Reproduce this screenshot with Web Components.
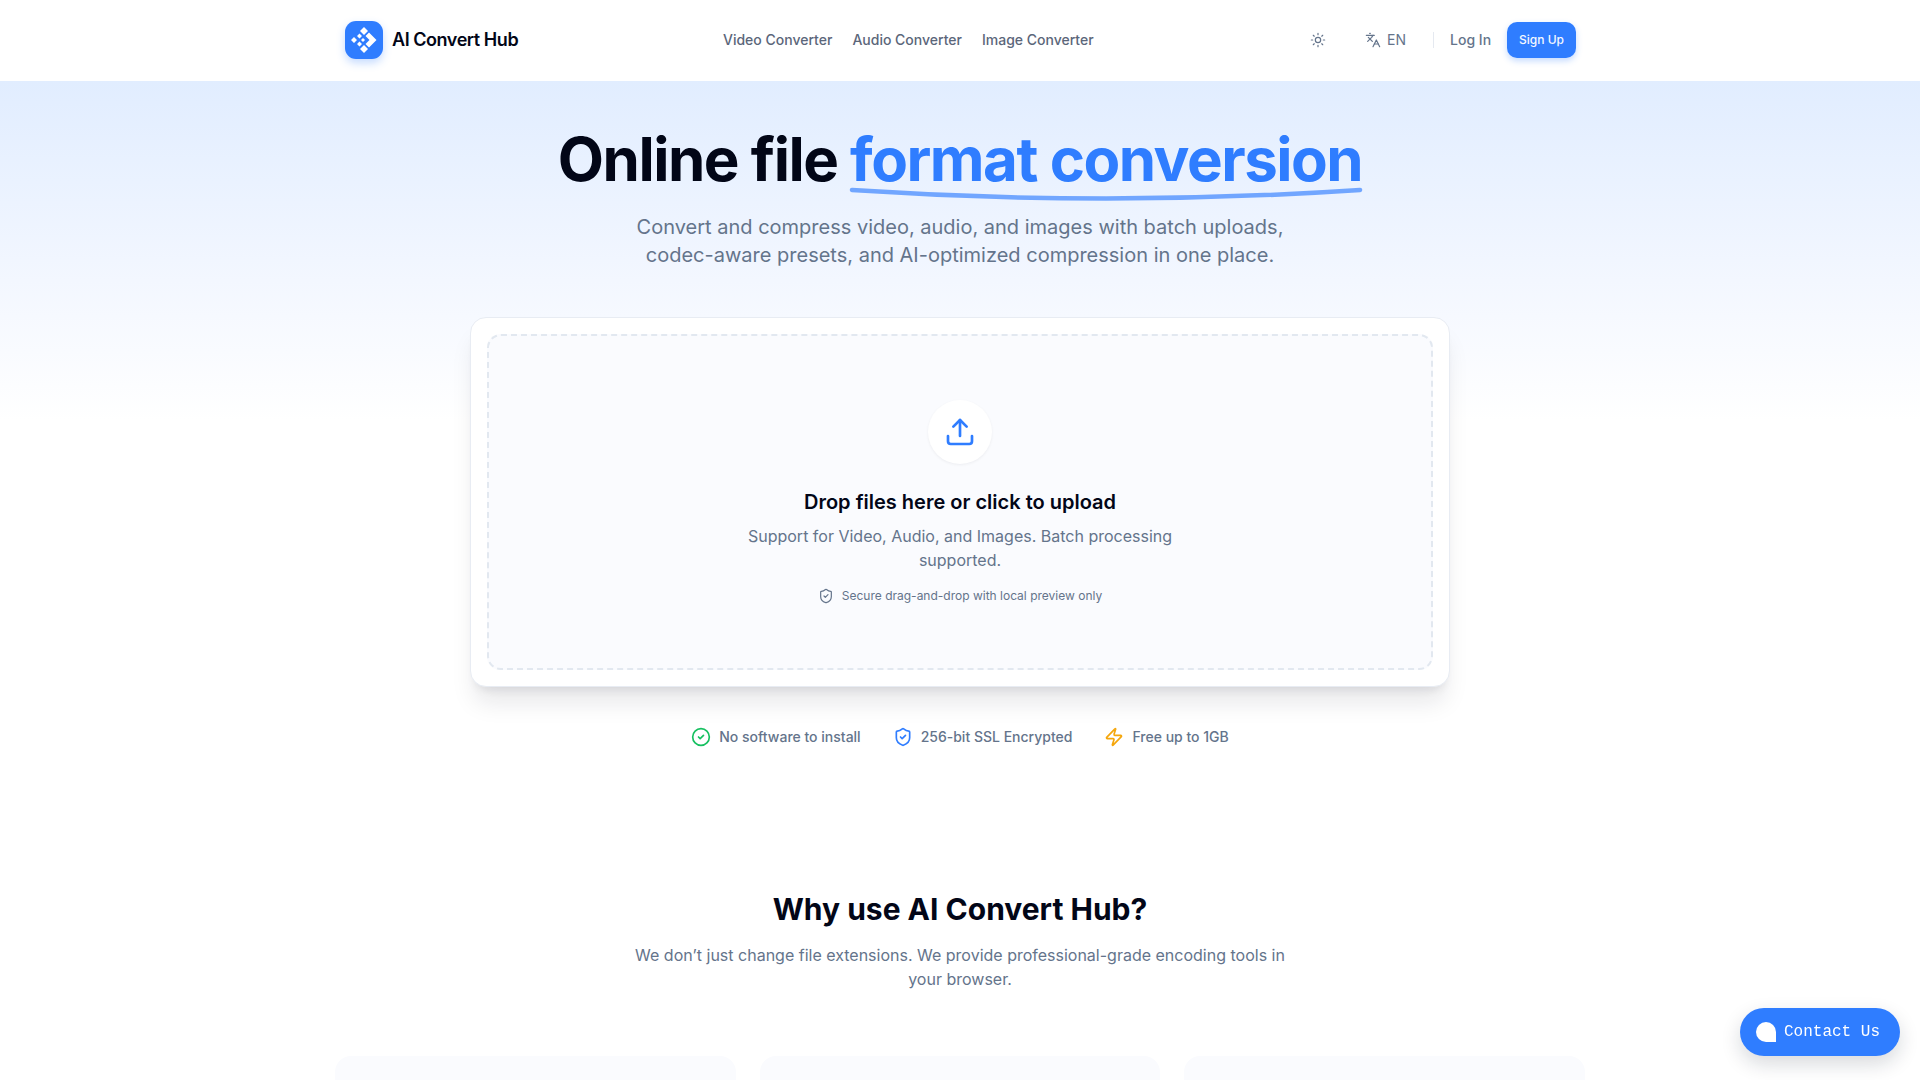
<!DOCTYPE html>
<html lang="en">
<head>
<meta charset="utf-8">
<title>AI Convert Hub</title>
<style>
  html, body { margin: 0; height: 100%; overflow: hidden; background: #fff; }
  body { font-family: Inter, "Liberation Sans", sans-serif; color: #0f172a; }
</style>
</head>
<body>
<site-header></site-header>
<hero-section></hero-section>
<why-section></why-section>
<contact-button></contact-button>

<script>
const ICONS = {
  sun: `<circle cx="12" cy="12" r="4"/><path d="M12 2v2M12 20v2M4.93 4.93l1.41 1.41M17.66 17.66l1.41 1.41M2 12h2M20 12h2M6.34 17.66l-1.41 1.41M19.07 4.93l-1.41 1.41"/>`,
  languages: `<path d="m5 8 6 6"/><path d="m4 14 6-6 2-3"/><path d="M2 5h12"/><path d="M7 2h1"/><path d="m22 22-5-10-5 10"/><path d="M14 18h6"/>`,
  upload: `<path d="M12 3v12"/><path d="m17 8-5-5-5 5"/><path d="M21 15v4a2 2 0 0 1-2 2H5a2 2 0 0 1-2-2v-4"/>`,
  shield: `<path d="M20 13c0 5-3.5 7.5-7.66 8.95a1 1 0 0 1-.67-.01C7.5 20.5 4 18 4 13V6a1 1 0 0 1 1-1c2 0 4.5-1.2 6.24-2.72a1.17 1.17 0 0 1 1.52 0C14.51 3.81 17 5 19 5a1 1 0 0 1 1 1z"/><path d="m9 12 2 2 4-4"/>`,
  check: `<circle cx="12" cy="12" r="10"/><path d="m9 12 2 2 4-4"/>`,
  zap: `<path d="M4 14a1 1 0 0 1-.78-1.63l9.9-10.2a.5.5 0 0 1 .86.46l-1.92 6.02A1 1 0 0 0 13 10h7a1 1 0 0 1 .78 1.63l-9.9 10.2a.5.5 0 0 1-.86-.46l1.92-6.02A1 1 0 0 0 11 14z"/>`
};

class LucideIcon extends HTMLElement {
  connectedCallback() {
    const size = this.getAttribute("size") || 16;
    const stroke = this.getAttribute("stroke") || 2;
    this.attachShadow({ mode: "open" }).innerHTML = `
      <style>:host { display: inline-flex; flex: none; } svg { display: block; }</style>
      <svg width="${size}" height="${size}" viewBox="0 0 24 24" fill="none" stroke="currentColor"
        stroke-width="${stroke}" stroke-linecap="round" stroke-linejoin="round">${ICONS[this.getAttribute("name")]}</svg>`;
  }
}
customElements.define("lucide-icon", LucideIcon);

class SiteHeader extends HTMLElement {
  constructor() {
    super();
    this.attachShadow({ mode: "open" }).innerHTML = `
    <style>
      :host { display: block; height: 81px; background: #fff; }
      .bar {
        width: 1232px; height: 79px; margin: 0 auto;
        display: grid; grid-template-columns: 379px 1fr auto; align-items: center;
      }
      .brand { display: flex; align-items: center; gap: 9px; font-size: 18px; font-weight: 600; color: #020617; letter-spacing: -0.45px; }
      .logo {
        width: 38px; height: 38px; margin-left: 1px; border-radius: 11px; background: #2f7dff;
        box-shadow: 0 4px 8px rgba(47,125,255,.28);
      }
      .logo svg { display: block; }
      nav { display: flex; gap: 20px; font-size: 14px; font-weight: 500; color: #5b667a; }
      .right { display: flex; align-items: center; font-size: 14px; font-weight: 500; color: #64748b; }
      .sun { margin-right: 39px; }
      .lang { display: flex; align-items: center; gap: 6px; margin-right: 27px; font-weight: 400; }
      .login { border-left: 1px solid #e5e9f0; padding-left: 16px; line-height: 16px; margin-right: 16px; }
      .signup {
        height: 36px; padding: 0 12px; border-radius: 10px; display: flex; align-items: center;
        background: #2f7dff; color: #f4f8ff; font-size: 12px; box-shadow: 0 3px 6px rgba(47,125,255,.28);
      }
    </style>
    <div class="bar">
      <div class="brand">
        <div class="logo">
          <svg width="38" height="38" viewBox="0 0 38 38" fill="#fff">
            <path d="M19 6l4 4-4 4-4-4zM19 24l4 4-4 4-4-4z"/>
            <path d="M24 11.500l7.500 7.500-7.500 7.500-3.500-3.500 4-4-4-4z"/>
            <path d="M14.500 12.500l2.500 2.500-2.500 2.500-2.500-2.500zM14.500 20.500l2.500 2.500-2.500 2.500-2.500-2.500zM9 16l3 3-3 3-3-3z"/>
            <path d="M18 17l2 2-2 2-2-2z"/>
          </svg>
        </div>
        <span>AI Convert Hub</span>
      </div>
      <nav><span>Video Converter</span><span>Audio Converter</span><span>Image Converter</span></nav>
      <div class="right">
        <lucide-icon class="sun" name="sun" size="16" stroke="1.8"></lucide-icon>
        <div class="lang"><lucide-icon name="languages" size="16" stroke="1.8"></lucide-icon><span>EN</span></div>
        <span class="login">Log In</span>
        <span class="signup">Sign Up</span>
      </div>
    </div>`;
  }
}
customElements.define("site-header", SiteHeader);

class UploadCard extends HTMLElement {
  constructor() {
    super();
    this.attachShadow({ mode: "open" }).innerHTML = `
    <style>
      :host {
        display: block; box-sizing: border-box; width: 980px; height: 370px; margin: 0 auto; padding: 16px;
        background: #fff; border: 1px solid #e8ecf3; border-radius: 16px;
        box-shadow: 0 20px 25px -5px rgba(15,23,42,.1), 0 8px 10px -6px rgba(15,23,42,.1);
      }
      .drop {
        box-sizing: border-box; height: 100%; border: 2px dashed #e2e8f0; border-radius: 14px; background: #fafbfe;
        display: flex; flex-direction: column; align-items: center; padding-top: 64px;
      }
      .circle {
        width: 64px; height: 64px; border-radius: 50%; background: #fff; color: #2f7dff;
        display: flex; align-items: center; justify-content: center;
        box-shadow: 0 1px 3px rgba(15,23,42,.06);
      }
      h2 { margin: 24px 0 0; font-size: 20px; line-height: 28px; font-weight: 600; color: #020617; }
      p { margin: 8px 0 0; width: 448px; text-align: center; font-size: 16px; line-height: 24px; color: #64748b; }
      .note { margin-top: 16px; display: flex; align-items: center; gap: 8px; font-size: 12px; line-height: 16px; color: #64748b; }
    </style>
    <div class="drop">
      <div class="circle"><lucide-icon name="upload" size="32" stroke="2"></lucide-icon></div>
      <h2>Drop files here or click to upload</h2>
      <p>Support for Video, Audio, and Images. Batch processing supported.</p>
      <div class="note"><lucide-icon name="shield" size="16" stroke="1.8"></lucide-icon><span>Secure drag-and-drop with local preview only</span></div>
    </div>`;
  }
}
customElements.define("upload-card", UploadCard);

class HeroSection extends HTMLElement {
  constructor() {
    super();
    this.attachShadow({ mode: "open" }).innerHTML = `
    <style>
      :host {
        display: block; height: 719px; box-sizing: border-box; padding-top: 43px;
        background: linear-gradient(180deg, #e1edff 0, #f3f7ff 200px, #ffffff 340px);
        text-align: center;
      }
      h1 { margin: 0; font-size: 60px; line-height: 70px; font-weight: 700; color: #020617; letter-spacing: -1.5px; }
      .accent { position: relative; display: inline-block; color: #2f7dff; }
      .accent svg { position: absolute; left: 2px; right: 2px; bottom: -13px; width: calc(100% - 4px); height: 20px; overflow: visible; }
      .sub { margin: 19px 0 0; font-size: 20px; line-height: 28px; color: #64748b; }
      upload-card { margin-top: 48px; }
      .trust { margin-top: 38px; display: flex; justify-content: center; gap: 32px; font-size: 14px; font-weight: 500; line-height: 24px; color: #64748b; }
      .trust div { display: flex; align-items: center; gap: 8px; }
      .green { color: #16c060; } .blue { color: #2f7dff; } .amber { color: #f5a60b; }
    </style>
    <h1>Online file <span class="accent">format conversion<svg viewBox="0 0 100 20" preserveAspectRatio="none"><path d="M0 3Q50 20 100 3" fill="none" stroke="#2f7dff" stroke-opacity=".65" stroke-width="4.500" stroke-linecap="round" vector-effect="non-scaling-stroke"/></svg></span></h1>
    <p class="sub">Convert and compress video, audio, and images with batch uploads,<br>codec-aware presets, and AI-optimized compression in one place.</p>
    <upload-card></upload-card>
    <div class="trust">
      <div><lucide-icon class="green" name="check" size="20"></lucide-icon><span>No software to install</span></div>
      <div><lucide-icon class="blue" name="shield" size="20"></lucide-icon><span>256-bit SSL Encrypted</span></div>
      <div><lucide-icon class="amber" name="zap" size="20"></lucide-icon><span>Free up to 1GB</span></div>
    </div>`;
  }
}
customElements.define("hero-section", HeroSection);

class WhySection extends HTMLElement {
  constructor() {
    super();
    this.attachShadow({ mode: "open" }).innerHTML = `
    <style>
      :host { display: block; padding-top: 91px; text-align: center; }
      h2 { margin: 0; font-size: 30px; line-height: 36px; font-weight: 700; color: #020617; }
      p { margin: 16px auto 0; width: 672px; font-size: 16px; line-height: 24px; color: #64748b; }
      .cards { width: 1250px; margin: 65px auto 0; display: grid; grid-template-columns: repeat(3, 1fr); gap: 24px; }
      .cards div { height: 200px; background: #fafbfe; border-radius: 16px; }
    </style>
    <h2>Why use AI Convert Hub?</h2>
    <p>We don’t just change file extensions. We provide professional-grade encoding tools in your browser.</p>
    <div class="cards"><div></div><div></div><div></div></div>`;
  }
}
customElements.define("why-section", WhySection);

class ContactButton extends HTMLElement {
  constructor() {
    super();
    this.attachShadow({ mode: "open" }).innerHTML = `
    <style>
      :host {
        position: fixed; right: 20px; bottom: 24px; width: 160px; height: 48px; box-sizing: border-box; padding-left: 16px;
        display: flex; align-items: center; gap: 8px; border-radius: 24px; background: #2f7dff; color: #fff;
        font: 16px "Liberation Mono", monospace; box-shadow: 0 8px 20px rgba(15,23,42,.16);
      }
      i { width: 20px; height: 20px; background: #fff; border-radius: 50% 50% 0 50%; }
    </style>
    <i></i><span>Contact Us</span>`;
  }
}
customElements.define("contact-button", ContactButton);
</script>
</body>
</html>
